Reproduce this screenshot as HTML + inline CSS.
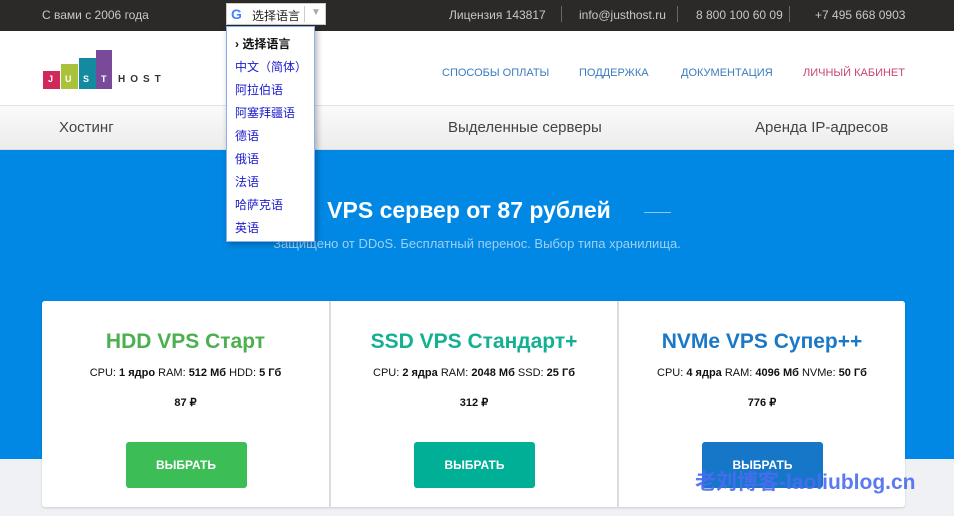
<!DOCTYPE html>
<html><head><meta charset="utf-8"><style>
*{margin:0;padding:0;box-sizing:border-box}
body{width:954px;height:516px;overflow:hidden;font-family:"Liberation Sans","Noto Sans CJK SC",sans-serif;background:#f0f1f5;position:relative}
.top{position:absolute;left:0;top:0;width:954px;height:31px;background:#2b2a29;color:#c8c8c8;font-size:12px}
.top span{position:absolute;top:8px}
.sep{position:absolute;top:6px;width:1px;height:16px;background:#666}
.hdr{position:absolute;top:31px;left:0;width:954px;height:74px;background:#fff}
.nav a{position:absolute;top:67px;font-size:11px;color:#3a7bbf;text-decoration:none}
.menu{position:absolute;top:105px;left:0;width:954px;height:45px;background:linear-gradient(#fafafa,#ececec);border-top:1px solid #e2e2e2;border-bottom:1px solid #ddd;font-size:15px;color:#444}
.menu span{position:absolute;top:13px}
.blue{position:absolute;top:150px;left:0;width:954px;height:309px;background:#0088e4}
h1{position:absolute;top:197px;left:-8px;width:954px;text-align:center;color:#fff;font-size:23px;font-weight:bold}
.sub{position:absolute;top:236px;left:0;width:954px;text-align:center;color:#9fd0f5;font-size:13px}
.card{position:absolute;top:301px;height:206px;background:#fff;text-align:center}
.card h2{margin-top:29px;font-size:21px;font-weight:bold}
.card .s{margin-top:13px;font-size:11px;color:#111}
.card .p{margin-top:17px;font-size:11px;font-weight:bold;color:#111}
.btn{position:absolute;top:141px;width:121px;height:46px;border-radius:3px;color:#fff;font-size:12px;font-weight:bold;line-height:46px;left:50%;margin-left:-60px}
.dd{position:absolute;left:226px;top:26px;width:89px;height:216px;background:#fff;border:1px solid #8ab0f0;box-shadow:2px 2px 6px rgba(0,0,0,.3);font-size:12px;color:#1a1acc}
.dd div{position:absolute;left:8px}
.gsel{position:absolute;left:226px;top:3px;width:100px;height:22px;background:#fff;border:1px solid #ccc;font-size:12px;color:#222}
</style></head><body>
<div class="top">
<span style="left:42px">С вами с 2006 года</span>
<span style="left:449px">Лицензия 143817</span><div class="sep" style="left:561px"></div>
<span style="left:579px">info@justhost.ru</span><div class="sep" style="left:677px"></div>
<span style="left:696px">8 800 100 60 09</span><div class="sep" style="left:789px"></div>
<span style="left:815px">+7 495 668 0903</span>
</div>
<div class="gsel"><span style="position:absolute;left:4px;top:2px;font-weight:bold;color:#4285f4;font-size:14px">G</span><span style="position:absolute;left:25px;top:3px">选择语言</span><span style="position:absolute;left:77px;top:2px;width:1px;height:16px;background:#ccc"></span><span style="position:absolute;left:84px;top:3px;color:#aaa;font-size:10px">▼</span></div>
<div class="hdr">
<div style="position:absolute;left:43px;top:40px;width:17px;height:18px;background:#d0285a"></div>
<div style="position:absolute;left:61px;top:33px;width:17px;height:25px;background:#a9c23a"></div>
<div style="position:absolute;left:79px;top:27px;width:17px;height:31px;background:#138aa0"></div>
<div style="position:absolute;left:96px;top:19px;width:16px;height:39px;background:#7a4a9a"></div>
<div style="position:absolute;left:43px;top:43px;width:70px;font-size:9px;font-weight:bold;color:#fff;letter-spacing:0"><span style="position:absolute;left:5px">J</span><span style="position:absolute;left:22px">U</span><span style="position:absolute;left:40px">S</span><span style="position:absolute;left:58px">T</span></div>
<div style="position:absolute;left:118px;top:43px;font-size:10px;font-weight:bold;color:#333;letter-spacing:5px">HOST</div>
</div>
<div class="nav"><a style="left:442px">СПОСОБЫ ОПЛАТЫ</a><a style="left:579px">ПОДДЕРЖКА</a><a style="left:681px">ДОКУМЕНТАЦИЯ</a><a style="left:803px;color:#c8466e">ЛИЧНЫЙ КАБИНЕТ</a></div>
<div class="menu"><span style="left:59px">Хостинг</span><span style="left:448px">Выделенные серверы</span><span style="left:755px">Аренда IP-адресов</span></div>
<div class="blue"></div>
<h1>VPS сервер от 87 рублей</h1>
<div style="position:absolute;left:644px;top:212px;width:27px;height:1px;background:#8cc4f0"></div>
<div class="sub">Защищено от DDoS. Бесплатный перенос. Выбор типа хранилища.</div>
<div style="position:absolute;left:42px;top:301px;width:863px;height:206px;background:#dcdcdc;border-radius:3px;box-shadow:0 1px 2px rgba(0,0,0,.15)"></div>
<div class="card" style="left:42px;width:287px;border-radius:3px 0 0 3px"><h2 style="color:#4caf50">HDD VPS Старт</h2><div class="s">CPU: <b>1 ядро</b> RAM: <b>512 Мб</b> HDD: <b>5 Гб</b></div><div class="p">87 ₽</div><div class="btn" style="background:#3dbd55">ВЫБРАТЬ</div></div>
<div class="card" style="left:331px;width:286px"><h2 style="color:#13b092">SSD VPS Стандарт+</h2><div class="s">CPU: <b>2 ядра</b> RAM: <b>2048 Мб</b> SSD: <b>25 Гб</b></div><div class="p">312 ₽</div><div class="btn" style="background:#00b096">ВЫБРАТЬ</div></div>
<div class="card" style="left:619px;width:286px;border-radius:0 3px 3px 0"><h2 style="color:#1a78c6">NVMe VPS Супер++</h2><div class="s">CPU: <b>4 ядра</b> RAM: <b>4096 Мб</b> NVMe: <b>50 Гб</b></div><div class="p">776 ₽</div><div class="btn" style="background:#1677c9">ВЫБРАТЬ</div></div>
<div style="position:absolute;left:695px;top:466px;font-size:21px;font-weight:bold;color:#4a6cf0;opacity:.9">老刘博客-laoliublog.cn</div>
<div class="dd">
<div style="top:8px;color:#111;font-weight:bold">› 选择语言</div>
<div style="top:31px">中文（简体）</div>
<div style="top:54px">阿拉伯语</div>
<div style="top:77px">阿塞拜疆语</div>
<div style="top:100px">德语</div>
<div style="top:123px">俄语</div>
<div style="top:146px">法语</div>
<div style="top:169px">哈萨克语</div>
<div style="top:192px">英语</div>
</div>
</body></html>
